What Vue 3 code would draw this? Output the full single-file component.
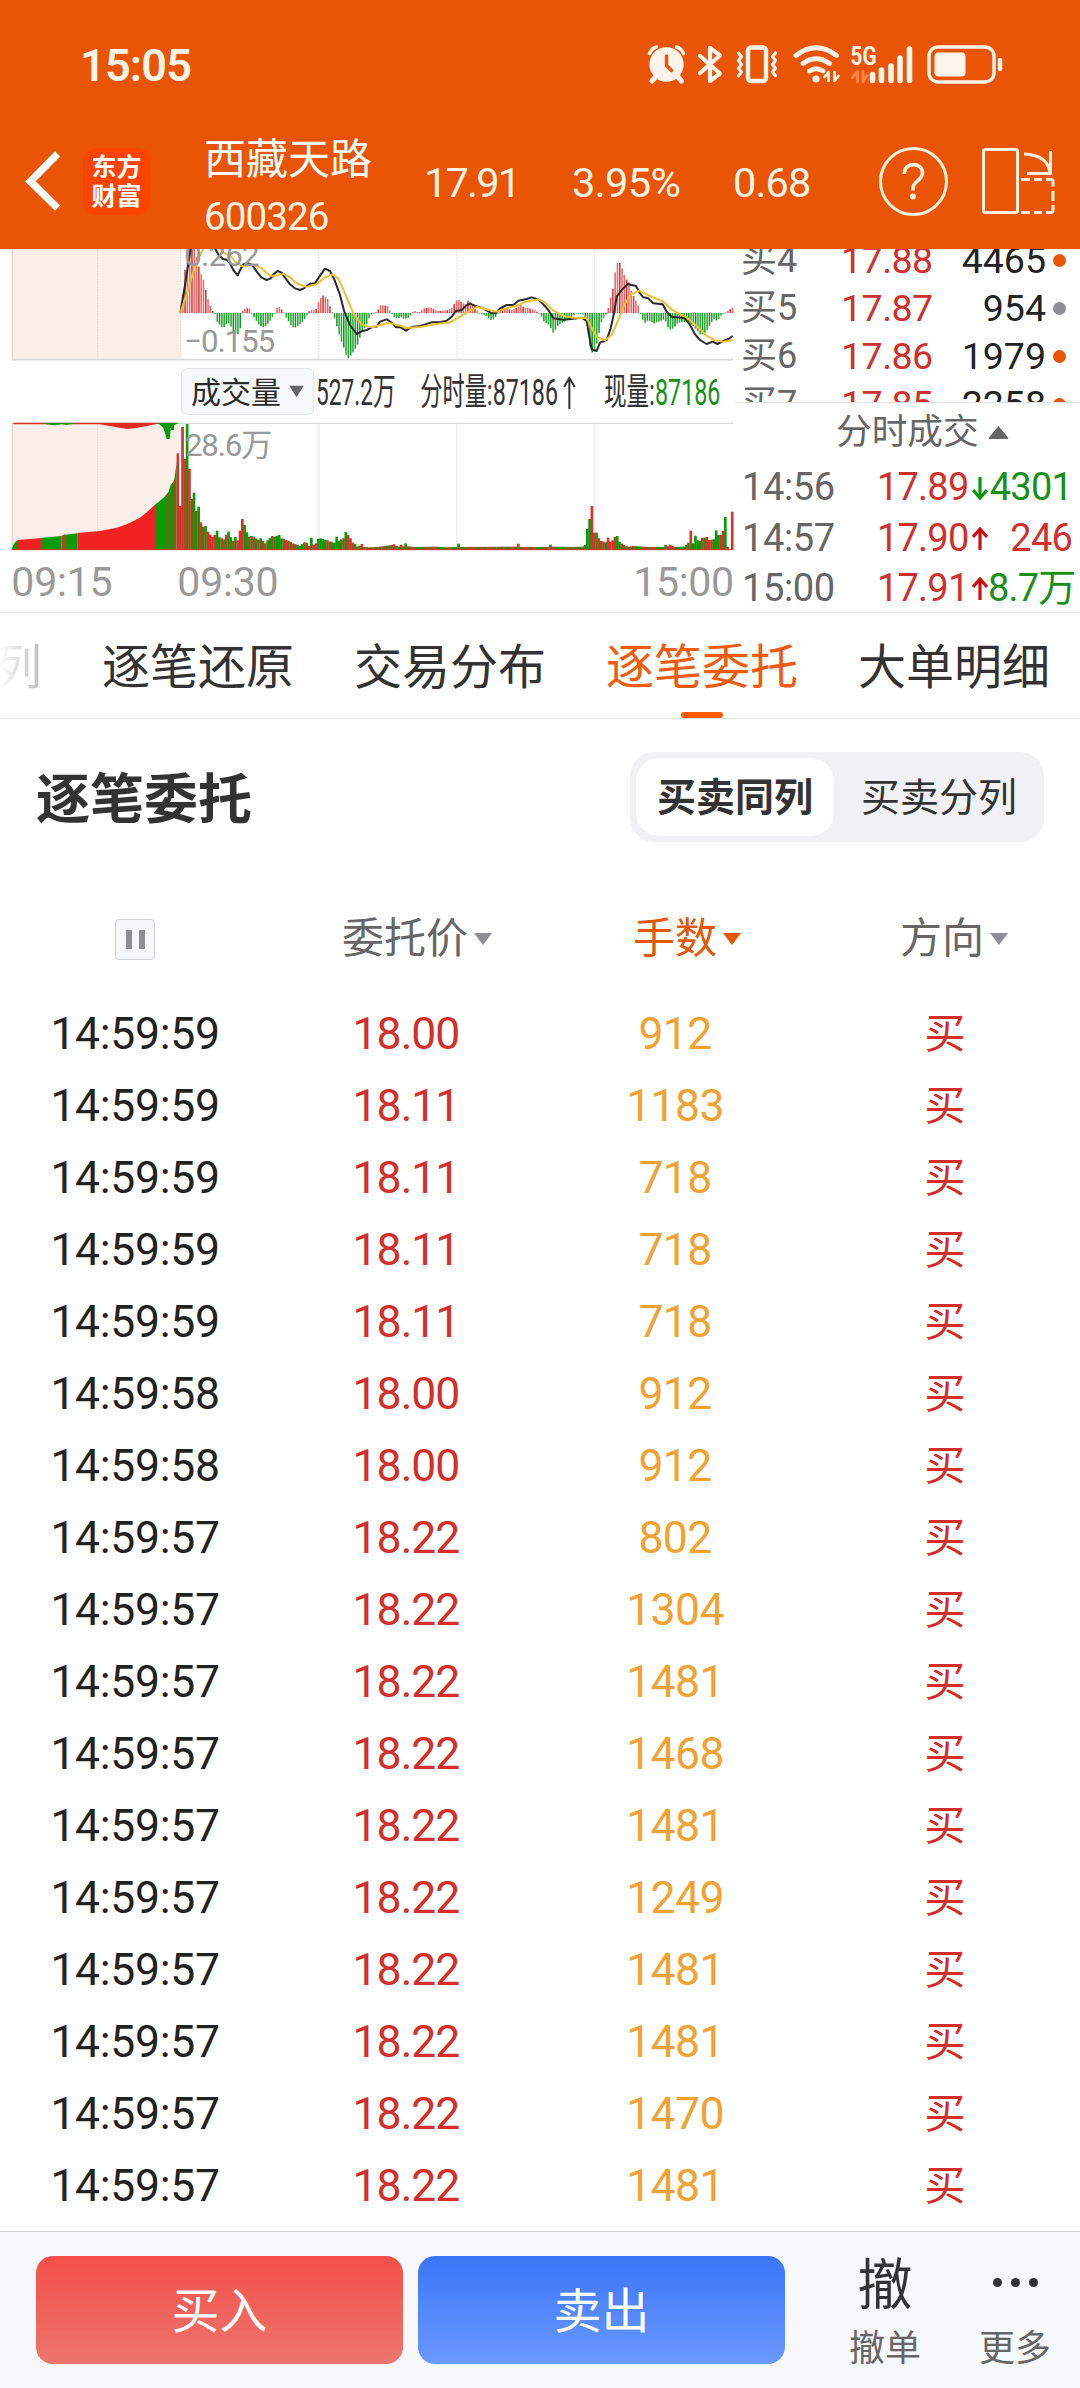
<script setup>
const macdPoints = [
  [541, 200], [553, 73], [562, 0], [580, 0], [590, 50], [600, 85], [610, 108], [618, 150], [625, 173], [632, 192], [640, 204],
  [643, 208], [650, 232], [658, 240], [667, 250], [675, 240], [682, 232], [690, 243], [700, 262], [712, 268], [718, 255], [722, 212],
  [726, 195], [735, 190], [748, 190], [752, 203], [756, 210], [765, 225], [775, 240], [790, 248], [800, 238], [812, 222], [820, 206],
  [825, 202], [831, 182], [840, 190], [850, 203], [855, 215], [870, 240], [880, 250], [895, 240], [910, 225], [918, 212], [922, 204],
  [928, 195], [945, 196], [950, 180], [957, 163], [968, 150], [980, 160], [990, 192], [996, 204], [1003, 225], [1010, 250], [1020, 285],
  [1030, 310], [1040, 343], [1055, 325], [1070, 300], [1080, 270], [1088, 253], [1100, 235], [1108, 210], [1120, 205],
  [1130, 198], [1140, 180], [1160, 183], [1168, 198], [1172, 204], [1180, 215], [1190, 222], [1200, 215], [1210, 222], [1225, 218], [1232, 206],
  [1240, 197], [1255, 203], [1270, 190], [1285, 187], [1300, 192], [1308, 198], [1325, 197], [1342, 195], [1355, 187], [1365, 168],
  [1375, 165], [1385, 175], [1395, 177], [1403, 165], [1415, 178], [1425, 187], [1432, 203], [1445, 207], [1460, 215], [1470, 225],
  [1480, 222], [1490, 208], [1495, 195], [1505, 187], [1520, 192], [1535, 195], [1550, 187], [1560, 180], [1570, 187], [1585, 190],
  [1600, 195], [1610, 201], [1620, 210], [1630, 230], [1645, 240], [1658, 265], [1670, 243], [1680, 235], [1695, 228], [1710, 220],
  [1725, 205], [1745, 207], [1758, 220], [1768, 310], [1777, 328], [1790, 290], [1800, 235], [1813, 210], [1820, 206], [1825, 172],
  [1835, 140], [1845, 70], [1853, 45], [1865, 72], [1875, 103], [1883, 105], [1892, 140], [1902, 160], [1912, 180], [1918, 203],
  [1923, 215], [1930, 237], [1942, 225], [1960, 235], [1980, 228], [1992, 222], [2005, 255], [2018, 250], [2030, 235], [2045, 230],
  [2060, 232], [2080, 245], [2100, 270], [2115, 262], [2130, 235], [2140, 222], [2150, 228], [2160, 212], [2168, 205],
  [2175, 202], [2185, 195], [2198, 186],
]

const volumePoints = [
  [534, 625, 'r'], [541, 783, 'r'], [548, 546, 'r'], [555, 642, 'r'], [561, 537, 'g'], [569, 672, 'r'], [576, 762, 'b'], [583, 743, 'g'],
  [590, 798, 'b'], [596, 785, 'g'], [603, 832, 'r'], [610, 845, 'b'], [617, 843, 'g'], [624, 860, 'r'], [631, 869, 'r'], [638, 875, 'r'],
  [645, 870, 'r'], [651, 857, 'g'], [658, 877, 'g'], [665, 880, 'r'], [672, 883, 'g'], [679, 870, 'r'], [686, 860, 'g'], [693, 877, 'g'],
  [700, 888, 'r'], [707, 876, 'g'], [713, 886, 'r'], [720, 857, 'r'], [727, 822, 'r'], [734, 840, 'g'], [741, 862, 'g'], [748, 876, 'r'],
  [755, 873, 'g'], [775, 884], [783, 880], [795, 895], [803, 886], [817, 873, 'r'], [824, 875, 'g'], [838, 870, 'g'], [845, 880],
  [860, 885], [880, 895], [900, 903], [913, 892], [922, 893], [928, 903], [934, 878, 'g'], [941, 899], [948, 895], [955, 882],
  [965, 880], [980, 886], [1000, 893], [1010, 875, 'g'], [1017, 887], [1030, 880], [1038, 861, 'g'], [1045, 870, 'r'], [1052, 880],
  [1060, 893], [1075, 905], [1086, 897, 'r'], [1095, 906], [1110, 907], [1130, 906], [1165, 902], [1183, 898, 'r'], [1193, 905],
  [1205, 899, 'r'], [1211, 904], [1218, 895, 'g'], [1225, 904], [1245, 906], [1310, 905], [1340, 907], [1368, 906], [1376, 896, 'g'],
  [1383, 906], [1548, 905], [1556, 896, 'r'], [1563, 906], [1645, 906], [1653, 899, 'g'], [1662, 905], [1720, 906], [1750, 905],
  [1757, 900, 'g'], [1763, 852, 'g'], [1770, 822, 'g'], [1777, 783, 'r'], [1784, 863, 'r'], [1791, 863, 'g'], [1798, 880, 'r'],
  [1805, 888], [1818, 892], [1825, 878, 'r'], [1832, 890], [1840, 886], [1848, 876, 'r'], [1853, 873, 'g'], [1860, 890],
  [1870, 900], [1885, 906], [1900, 903], [1940, 906], [1990, 906], [1998, 900, 'g'], [2005, 904], [2012, 899, 'r'], [2025, 906],
  [2050, 905], [2060, 900], [2067, 893, 'g'], [2074, 857, 'r'], [2081, 895, 'g'], [2088, 872, 'g'], [2094, 886], [2101, 888],
  [2108, 879], [2122, 876, 'r'], [2130, 885], [2140, 883], [2149, 856, 'g'], [2156, 870], [2164, 870, 'r'], [2170, 857, 'r'],
  [2177, 816, 'g'], [2184, 906, 'r'], [2190, 914, 'r'], [2197, 800, 'r'],
]

const STEP = 6.9
const volumeColors = { r: '#d9322b', g: '#0a9a0a', b: '#8d5a14' }
const volumePattern = 'ggrbgrrgbgrrg'

function sample(points, x) {
  for (let i = 1; i < points.length; i++) {
    const [x1, y1] = points[i]
    if (x <= x1) {
      const [x0, y0] = points[i - 1]
      return y0 + ((y1 - y0) * (x - x0)) / (x1 - x0)
    }
  }
  return points[points.length - 1][1]
}

const macdBars = []
for (let x = 546, i = 0; x < 2200; x += STEP, i++) {
  const y = sample(macdPoints, x)
  const up = y < 204
  macdBars.push({
    x,
    y: up ? y : 204,
    h: Math.max(Math.abs(y - 204), 2),
    fill: up ? (i % 3 === 1 ? '#c63a3a' : '#f46464') : i % 3 === 1 ? '#1c8f2a' : '#27a834',
  })
}

const volumeBars = []
for (let i = 0; i < 242; i++) {
  const x = 534 + STEP * i
  const hit = volumePoints.find((p) => Math.abs(p[0] - x) <= STEP / 2)
  const y = hit ? hit[1] : sample(volumePoints, x)
  const key = (hit && hit[2]) || volumePattern[(i * 7 + (i >> 2)) % volumePattern.length]
  volumeBars.push({ x: x - 4.2, y, h: 915 - y, fill: volumeColors[key] })
}

const bids = [
  { label: '买4', price: '17.88', qty: '4465', dot: 'hot' },
  { label: '买5', price: '17.87', qty: '954', dot: 'cold' },
  { label: '买6', price: '17.86', qty: '1979', dot: 'hot' },
  { label: '买7', price: '17.85', qty: '2258', dot: 'hot' },
]

const deals = [
  { time: '14:56', price: '17.89', up: false, qty: '4301', tone: 'green' },
  { time: '14:57', price: '17.90', up: true, qty: '246', tone: 'red' },
  { time: '15:00', price: '17.91', up: true, qty: '8.7万', tone: 'green' },
]

const tabs = ['列', '逐笔还原', '交易分布', '逐笔委托', '大单明细']
const activeTab = 3

const orders = [
  ['14:59:59', '18.00', '912'],
  ['14:59:59', '18.11', '1183'],
  ['14:59:59', '18.11', '718'],
  ['14:59:59', '18.11', '718'],
  ['14:59:59', '18.11', '718'],
  ['14:59:58', '18.00', '912'],
  ['14:59:58', '18.00', '912'],
  ['14:59:57', '18.22', '802'],
  ['14:59:57', '18.22', '1304'],
  ['14:59:57', '18.22', '1481'],
  ['14:59:57', '18.22', '1468'],
  ['14:59:57', '18.22', '1481'],
  ['14:59:57', '18.22', '1249'],
  ['14:59:57', '18.22', '1481'],
  ['14:59:57', '18.22', '1481'],
  ['14:59:57', '18.22', '1470'],
  ['14:59:57', '18.22', '1481'],
]
</script>

<template>
  <div class="page">
    <header class="top">
      <div class="status">
        <span class="clock">15:05</span>
        <svg class="status-icons" viewBox="640 40 370 48" width="370" height="48">
          <g fill="none" stroke="#fff4ec" stroke-linecap="round" stroke-linejoin="round">
            <!-- alarm -->
            <circle cx="666.500" cy="64.500" r="17.200" fill="#fff4ec" stroke="none" />
            <path d="M649.500 53.500q2-5 7-6.500M683.500 53.500q-2-5-7-6.500" stroke-width="3.500" />
            <path d="M655.500 77l-3.500 4M678 77l3.500 4" stroke-width="5" />
            <path d="M666.500 56v9.500l5 5" stroke="#e95504" stroke-width="3.500" />
            <!-- bluetooth -->
            <path d="M700 56l20 17.500-10 7.500V48l10 7.500L700 73" stroke-width="4.200" />
            <!-- vibrate -->
            <rect x="748" y="47.500" width="18" height="33.500" rx="3" stroke-width="4.400" />
            <path d="M738.500 53l3 3.800-3 3.800 3 3.800-3 3.800 3 3.800-3 3.800M775.500 53l-3 3.800 3 3.800-3 3.800 3 3.800-3 3.800 3 3.800" stroke-width="3.200" />
            <!-- wifi -->
            <path d="M796 55.500q20-15.500 40.500 0M803 63.500q13-9.500 26.500 0M809.500 71q6.500-4.500 13.500 0" stroke-width="4.800" />
            <circle cx="816" cy="79" r="3.600" fill="#fff4ec" stroke="none" />
            <path d="M828.500 81V72l-4 5M834.500 72v9l4-5" stroke-width="2.600" />
            <!-- mobile data -->
            <path d="M857.500 81.500V71.500l-5 6M863 71.500v10l4-6" stroke="#ff8544" stroke-width="3" />
            <path d="M872.500 74.500v6M881.500 70v10.500M891 66v14.500M900 58v22.500M909.500 49v31.500" stroke-width="5.600" />
            <!-- battery -->
            <rect x="929" y="47" width="65" height="35" rx="9" stroke-width="3.400" />
            <rect x="934.500" y="52.500" width="31" height="24" rx="4" fill="#fff4ec" stroke="none" />
            <path d="M1000 60v9" stroke-width="4.600" />
          </g>
          <text x="850.500" y="65" class="net" textLength="26" lengthAdjust="spacingAndGlyphs">5G</text>
        </svg>
      </div>
      <div class="nav">
        <svg class="back" viewBox="0 0 36 60" width="36" height="60">
          <path d="M31 5.500L6.500 30.500 31 54.500" fill="none" stroke="#fff" stroke-width="7.500" stroke-linecap="square" />
        </svg>
        <div class="logo"><span>东方</span><span>财富</span></div>
        <div class="stock">
          <div class="name">西藏天路</div>
          <div class="code">600326</div>
        </div>
        <span class="quote q1">17.91</span>
        <span class="quote q2">3.95%</span>
        <span class="quote q3">0.68</span>
        <svg class="nav-icons" viewBox="875 142 184 80" width="184" height="80">
          <g fill="none" stroke="#fff1e0" stroke-width="3">
            <circle cx="913.500" cy="181.500" r="33" />
            <path d="M904.500 174v-1.500c0-10.500 18-10.500 18 0 0 8-9.500 9-9.500 15.500v2.500" stroke-width="3.600" />
            <circle cx="913" cy="196.500" r="3" fill="#fff1e0" stroke="none" />
            <rect x="983.500" y="149.500" width="34" height="63" rx="2" />
            <path d="M1024 154q24 1 26 19M1050.500 151v22.500h-23.500" />
            <path d="M1021 179.500h9M1034 179.500h8M1046 179.500h5q2 0 2 2v5M1053 191v10M1053 205v5q0 2.500-2 2.500h-5M1042 212.500h-8M1030 212.500h-9" />
          </g>
        </svg>
      </div>
    </header>

    <section class="market">
      <svg class="chart" viewBox="0 12 2205 1089" width="735" height="363">
        <rect x="36" y="12" width="505" height="332" fill="#fdeee7" />
        <rect x="36" y="535" width="505" height="380" fill="#fdeee7" />
        <g fill="none" stroke="#d9d9d9" stroke-width="4">
          <path d="M37 12v332M37 535v380" />
          <path d="M36 344H2199" stroke-width="5" />
          <path d="M36 535H2199" />
          <g stroke-width="3" stroke-dasharray="4 4">
            <path d="M293 12v332M542 12v332M956 12v332M1370 12v332M1784 12v332" />
            <path d="M293 535v380M542 535v380M956 535v380M1370 535v380M1784 535v380" />
          </g>
        </g>

        <rect v-for="(b, i) in macdBars" :key="'m' + i" :x="b.x" :y="b.y" width="4.600" :height="b.h" :fill="b.fill" />
        <g fill="none" stroke-width="6" stroke-linejoin="round">
          <path stroke="#2b2b2b" d="M541 203L555 120 566 50 573 5M643 5L647 14 655 28 668 42 680 44 690 55 700 75 713 91 722 72 730 58 745 55 757 60 770 80 785 98 800 105 812 100 820 88 833 78 845 83 855 98 870 118 885 130 900 135 912 130 930 116 945 115 960 92 975 71 990 78 1003 103 1020 150 1033 200 1050 240 1070 267 1085 259 1100 255 1120 245 1130 245 1140 230 1160 223 1175 233 1188 247 1200 246 1218 257 1235 246 1260 243 1295 232 1320 232 1340 227 1355 215 1368 198 1385 195 1398 182 1410 176 1425 182 1450 190 1475 205 1488 204 1500 190 1520 180 1540 180 1555 167 1580 162 1595 157 1615 163 1630 178 1645 195 1660 220 1690 224 1720 221 1745 218 1760 228 1767 270 1775 313 1790 318 1800 293 1820 285 1832 250 1842 205 1850 155 1865 135 1883 117 1908 123 1920 145 1930 157 1945 160 1960 175 1988 178 2000 200 2015 215 2055 220 2070 240 2085 268 2100 285 2120 297 2138 290 2152 297 2170 288 2185 282 2198 273" />
          <path stroke="#ecc034" d="M541 203L560 150 580 80 600 30 614 5M655 5L672 25 690 30 705 50 730 65 760 58 785 70 810 92 830 92 850 86 870 97 890 115 920 126 950 118 975 97 997 88 1015 100 1035 145 1060 205 1085 238 1105 245 1120 246 1140 240 1165 233 1200 242 1220 249 1260 246 1310 237 1350 232 1380 215 1410 197 1432 186 1455 192 1490 200 1520 190 1550 182 1580 170 1615 163 1635 172 1660 197 1690 212 1720 218 1760 219 1775 250 1790 275 1815 286 1835 270 1855 225 1875 175 1895 147 1918 137 1950 153 1990 170 2020 197 2060 217 2090 243 2120 272 2145 286 2170 290 2198 285" />
        </g>

        <g class="axis">
          <text x="553" y="62" textLength="226" font-size="94">0.262</text>
          <text x="553" y="320" textLength="272" font-size="94">−0.155</text>
        </g>

        <!-- indicator row -->
        <rect x="544" y="371" width="397" height="137" rx="18" fill="#f7f8fa" stroke="#dde0e5" stroke-width="3" />
        <text x="573" y="474" font-size="90" class="ink" textLength="270">成交量</text>
        <path d="M868 422h43l-21.500 35z" fill="#666" />
        <g font-size="112" class="soft">
          <text x="948" y="480" textLength="239" lengthAdjust="spacingAndGlyphs">527.2万</text>
          <text x="1261" y="480" textLength="216" lengthAdjust="spacingAndGlyphs">分时量:</text>
          <text x="1478" y="480" textLength="196" lengthAdjust="spacingAndGlyphs">87186</text>
          <text x="1812" y="480" textLength="152" lengthAdjust="spacingAndGlyphs">现量:</text>
          <text x="1965" y="480" textLength="196" lengthAdjust="spacingAndGlyphs" fill="#189018">87186</text>
        </g>
        <path d="M1708 492V400M1692 426l16-27 16 27" fill="none" stroke="#333" stroke-width="6" />

        <!-- call auction -->
        <path d="M40 533H530v4H470L440 543 410 549 380 552 350 547 300 538H40z" fill="#e02a24" />
        <path d="M128 534H232L200 540 185 537 165 541 140 538zM473 534H537L522 541V555H513V545L509 582H500L490 548z" fill="#0a9a0a" />
        <path d="M36 915V908L46 890 55 885V915z" fill="#0a9a0a" />
        <path d="M54 915V885L90 882 126 879V915z" fill="#f22222" />
        <path d="M126 915V878L185 873V915z" fill="#0a9a0a" />
        <path d="M185 915V872L195 868V915z" fill="#b8441c" />
        <path d="M195 915V869L232 865V915z" fill="#0a9a0a" />
        <path d="M232 915V864L300 858 350 848 380 838 420 818 440 802 470 775V915z" fill="#f22222" />
        <path d="M468 915V777L490 759 505 742 512 720 522 708 526 680 530 650V915z" fill="#0a9a0a" />
        <path d="M507 915V745M525 915V705" stroke="#a84a18" stroke-width="6" />

        <rect v-for="(b, i) in volumeBars" :key="'v' + i" :x="b.x" :y="b.y" width="8" :height="b.h" :fill="b.fill" />
        <path d="M540 783V546" stroke="#fff" stroke-width="4" />
        <path d="M36 914H2199" stroke="#cf3a2c" stroke-width="3" />

        <g class="axis">
          <text x="555" y="632" font-size="94" textLength="262">28.6万</text>
          <text x="34" y="1052" font-size="123" textLength="304">09:15</text>
          <text x="532" y="1052" font-size="123" textLength="304">09:30</text>
          <text x="1900" y="1052" font-size="123" textLength="302">15:00</text>
        </g>
      </svg>

      <aside class="side">
        <div class="book">
          <div v-for="b in bids" :key="b.label" class="bid">
            <span class="lab">{{ b.label }}</span>
            <span class="pr">{{ b.price }}</span>
            <span class="qt">{{ b.qty }}</span>
            <i class="dot" :class="b.dot"></i>
          </div>
        </div>
        <div class="deal-title">
          分时成交
          <svg width="21" height="14" viewBox="0 0 21 14"><path d="M10.500 0L20 11.500q.8 1.500-1 1.500H2q-1.800 0-1-1.500z" fill="#666" /></svg>
        </div>
        <div v-for="d in deals" :key="d.time" class="deal">
          <span class="tm">{{ d.time }}</span>
          <span class="pr">{{ d.price }}</span>
          <svg class="arrow" :class="{ down: !d.up }" width="16" height="24" viewBox="0 0 16 24">
            <path d="M8 23V3M1 10l7-8 7 8" fill="none" stroke="currentColor" stroke-width="3.200" />
          </svg>
          <span class="qt" :class="d.tone">{{ d.qty }}</span>
        </div>
      </aside>
    </section>

    <nav class="tabs">
      <span v-for="(t, i) in tabs" :key="t" class="tab" :class="{ active: i === activeTab, fading: i === 0 }">{{ t }}</span>
    </nav>

    <section class="heading">
      <h1>逐笔委托</h1>
      <div class="segment">
        <span class="seg on">买卖同列</span>
        <span class="seg">买卖分列</span>
      </div>
    </section>

    <div class="thead">
      <div><span class="pause"><i></i><i></i></span></div>
      <div>委托价<i class="tri"></i></div>
      <div class="sorted">手数<i class="tri"></i></div>
      <div class="dir">方向<i class="tri"></i></div>
    </div>

    <div class="tbody">
      <div v-for="(o, i) in orders" :key="i" class="row">
        <span class="time">{{ o[0] }}</span>
        <span class="price">{{ o[1] }}</span>
        <span class="lots">{{ o[2] }}</span>
        <span class="side-cell">买</span>
      </div>
    </div>

    <footer class="actions">
      <button class="btn buy">买入</button>
      <button class="btn sell">卖出</button>
      <div class="tool">
        <span class="glyph">撤</span>
        <span class="cap">撤单</span>
      </div>
      <div class="tool more">
        <span class="glyph dots"><i></i><i></i><i></i></span>
        <span class="cap">更多</span>
      </div>
    </footer>
  </div>
</template>

<style>
body {
  margin: 0;
  background: #fff;
}
</style>

<style scoped>
.page {
  width: 1080px;
  height: 2388px;
  display: flex;
  flex-direction: column;
  overflow: hidden;
  background: #fff;
  color: #333;
  font-family: Roboto, "Noto Sans CJK SC", sans-serif;
}
.top {
  height: 249px;
  flex: none;
  background: #e95504;
  color: #fff4e6;
}
.status {
  display: flex;
  height: 88px;
  box-sizing: border-box;
  padding: 40px 70px 0 80px;
  justify-content: space-between;
}
.clock {
  font-size: 45px;
  font-weight: 600;
  line-height: 51px;
  letter-spacing: -0.8px;
}
.net {
  font: 700 26px Roboto, sans-serif;
  fill: #fff4ec;
}
.nav {
  display: flex;
  height: 161px;
}
.back {
  margin: 63px 0 0 24px;
  flex: none;
}
.logo {
  width: 67px;
  height: 67px;
  margin: 60px 0 0 23px;
  box-sizing: border-box;
  padding-top: 5px;
  border-radius: 13px;
  background: #ff4400;
  color: #fff;
  display: flex;
  flex-direction: column;
  align-items: center;
  font-size: 25px;
  font-weight: 700;
  line-height: 29px;
}
.stock {
  width: 220px;
  margin-left: 54px;
  padding-top: 42px;
  white-space: nowrap;
}
.name {
  font-size: 42px;
  line-height: 60px;
  color: #fff;
}
.code {
  font-size: 38.500px;
  line-height: 50px;
  margin-top: 2px;
  letter-spacing: -0.9px;
}
.quote {
  font-size: 41.500px;
  line-height: 50px;
  margin-top: 70px;
  white-space: nowrap;
}
.q1 {
  width: 148px;
  letter-spacing: -1.800px;
}
.q2 {
  width: 161px;
  letter-spacing: -0.6px;
}
.q3 {
  width: 142px;
  letter-spacing: -0.9px;
}
.nav-icons {
  margin-top: 54px;
  flex: none;
}
.market {
  height: 363px;
  flex: none;
  display: flex;
  border-bottom: 1px solid #e1e1e1;
}
.chart {
  flex: none;
  font-family: Roboto, "Noto Sans CJK SC", sans-serif;
}
.axis {
  fill: #999;
}
.ink {
  fill: #2b2b2b;
}
.soft {
  fill: #333;
}
.side {
  width: 345px;
  display: flex;
  flex-direction: column;
}
.book {
  height: 153px;
  flex: none;
  overflow: hidden;
  border-bottom: 1px solid #e1e1e1;
}
.bid {
  height: 48px;
  display: flex;
  align-items: center;
  font-size: 37.500px;
  line-height: 48px;
}
.bid:first-child {
  margin-top: -13px;
}
.lab {
  width: 106px;
  padding-left: 6px;
  box-sizing: border-box;
  font-size: 36px;
  color: #666;
}
.bid .pr {
  width: 93px;
  letter-spacing: -0.5px;
}
.bid .qt {
  width: 112px;
  text-align: right;
  color: #222;
}
.pr {
  color: #d0302d;
}
.dot {
  width: 13px;
  height: 13px;
  border-radius: 50%;
  margin-left: 7px;
}
.hot {
  background: #e85504;
}
.cold {
  background: #8e8e93;
}
.deal-title {
  height: 59px;
  flex: none;
  display: flex;
  align-items: center;
  padding-left: 101px;
  gap: 9px;
  font-size: 35.700px;
  line-height: 59px;
  color: #666;
}
.deal {
  height: 51.200px;
  flex: none;
  display: flex;
  align-items: center;
  font-size: 38px;
  line-height: 51px;
}
.deal:last-child {
  height: 49px;
}
.deal .tm {
  width: 142px;
  padding-left: 7px;
  box-sizing: border-box;
  color: #666;
  letter-spacing: -0.4px;
}
.deal .pr {
  width: 95px;
  letter-spacing: -0.8px;
}
.arrow {
  color: #cf0d0d;
  flex: none;
}
.arrow.down {
  color: #0a960a;
  transform: rotate(180deg);
}
.deal .qt {
  width: 84px;
  text-align: right;
  letter-spacing: -0.8px;
  white-space: nowrap;
}
.green {
  color: #189018;
}
.red {
  color: #d0302d;
}
.tabs {
  height: 105px;
  flex: none;
  display: flex;
  gap: 60px;
  margin-left: -6px;
  border-bottom: 1px solid #e1e1e1;
}
.tab {
  position: relative;
  flex: none;
  font-size: 48px;
  line-height: 109px;
}
.tab.fading {
  color: transparent;
  background: linear-gradient(90deg, #fff 10%, #bbb 100%);
  background-clip: text;
  -webkit-background-clip: text;
}
.tab.active {
  color: #f25a0c;
}
.tab.active::after {
  content: "";
  position: absolute;
  left: 75px;
  bottom: 0;
  width: 42px;
  height: 6px;
  border-radius: 3px;
  background: #ff5a00;
}
.heading {
  display: flex;
  justify-content: space-between;
  padding: 33px 36px 0;
  height: 90px;
}
h1 {
  margin: 0;
  font-size: 54px;
  line-height: 98px;
  font-weight: 700;
}
.segment {
  width: 414px;
  height: 90px;
  box-sizing: border-box;
  padding: 6px 0 6px 6px;
  border-radius: 24px;
  background: #f1f1f3;
  display: flex;
}
.seg {
  width: 210px;
  text-align: center;
  font-size: 39px;
  line-height: 81px;
}
.seg.on {
  width: 198px;
  height: 78px;
  border-radius: 23px;
  background: #fff;
  font-weight: 700;
}
.thead {
  height: 56px;
  margin-top: 69px;
  display: flex;
  flex: none;
  font-size: 42px;
  line-height: 62px;
  color: #666;
}
.thead > div {
  width: 270px;
  display: flex;
  justify-content: center;
  align-items: center;
}
.thead > .dir {
  width: 264px;
}
.sorted {
  color: #e05a08;
}
.tri {
  width: 18px;
  height: 12px;
  margin: 0 -24px 0 6px;
  background: #8e8e93;
  clip-path: polygon(0 0, 100% 0, 50% 100%);
}
.sorted .tri {
  background: #e85504;
}
.pause {
  width: 40px;
  height: 41px;
  box-sizing: border-box;
  border: 1px solid #cfd2d6;
  border-radius: 4px;
  background: #f6f7f9;
  display: flex;
  justify-content: center;
  align-items: center;
  gap: 7px;
}
.pause i {
  width: 6px;
  height: 19px;
  background: #8e8e93;
}
.tbody {
  margin-top: 31px;
}
.row {
  height: 72px;
  display: flex;
  font-size: 44.500px;
  line-height: 72px;
  letter-spacing: -0.6px;
  text-align: center;
}
.row > span {
  width: 270px;
}
.time {
  color: #222;
  letter-spacing: -0.3px;
}
.row > .price {
  color: #d32f2c;
  letter-spacing: -1px;
  padding-left: 2px;
  box-sizing: border-box;
}
.lots {
  color: #f0a233;
}
.row > .side-cell {
  font-size: 41px;
  letter-spacing: 0;
  color: #d62c2a;
}
.actions {
  height: 157px;
  margin-top: auto;
  box-sizing: border-box;
  border-top: 1px solid #d0d4d9;
  background: #f7f8fa;
  display: flex;
  padding: 24px 0 0 36px;
}
.btn {
  width: 367px;
  height: 108px;
  margin: 0 15px 0 0;
  border: 0;
  border-radius: 17px;
  color: #fff;
  font-family: inherit;
  font-size: 48px;
  line-height: 112px;
  padding: 0;
}
.buy {
  background: linear-gradient(#f45049, #ec756e);
}
.sell {
  background: linear-gradient(#3a76f8, #6c98ff);
}
.tool {
  width: 130px;
  margin-left: 20px;
  display: flex;
  flex-direction: column;
  align-items: center;
}
.tool.more {
  margin-left: 0;
}
.glyph {
  font-size: 55px;
  line-height: 58px;
  height: 66px;
  color: #333;
}
.dots {
  display: flex;
  gap: 9px;
  padding-top: 22px;
  box-sizing: border-box;
}
.dots i {
  width: 9px;
  height: 9px;
  border-radius: 50%;
  background: #333;
}
.cap {
  font-size: 36px;
  line-height: 55px;
  color: #666;
}
</style>
